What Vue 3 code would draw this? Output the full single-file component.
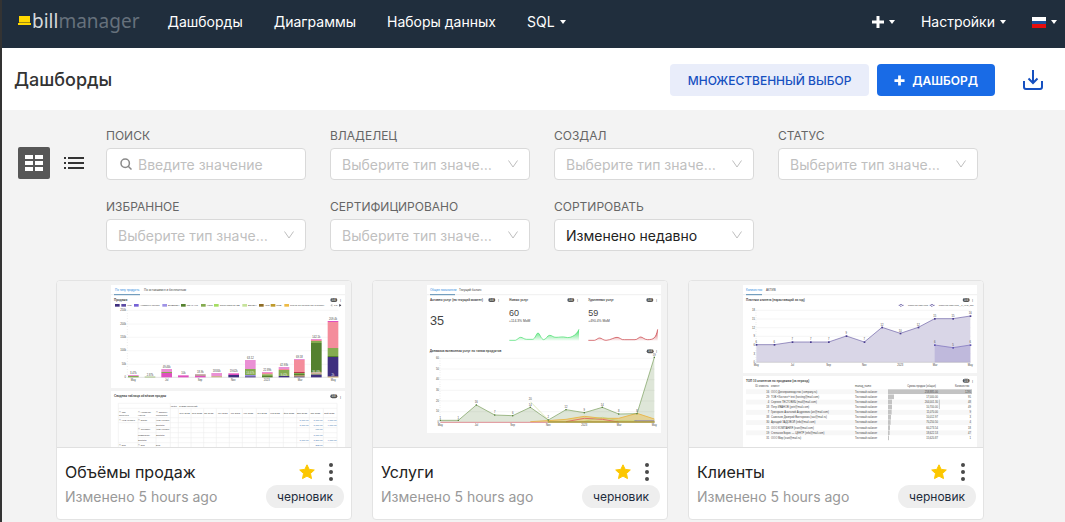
<script setup>
import { ref } from "vue";

const viewMode = ref("grid");
const search = ref("");

const menu = ["Дашборды", "Диаграммы", "Наборы данных"];

const filters = ref([
  { id: "owner", label: "Владелец", value: "" },
  { id: "created", label: "Создал", value: "" },
  { id: "status", label: "Статус", value: "" },
  { id: "favorite", label: "Избранное", value: "" },
  { id: "certified", label: "Сертифицировано", value: "" },
  { id: "sort", label: "Сортировать", value: "recent" },
]);

const dashboards = ref([
  { id: 1, kind: "sales", title: "Объёмы продаж", favorite: true },
  { id: 2, kind: "services", title: "Услуги", favorite: true },
  { id: 3, kind: "clients", title: "Клиенты", favorite: true },
]);

// colours of the stacked bars
const c = {
  navy: "#3f2f7f",
  violet: "#9a8fe0",
  dark: "#54812f",
  green: "#84ab50",
  pink: "#ea90d4",
  magenta: "#df50bf",
  salmon: "#f48d9b",
  red: "#b33a4b",
  brown: "#a5803f",
  sand: "#cdb28f",
  orange: "#d9a441",
};

const bars = [
  { x: 250, label: "3.47k", parts: [[300, 303, c.pink], [303, 307, c.green]] },
  { x: 300, label: "2.87k", parts: [[305, 307, c.green]] },
  { x: 350, label: "49.46k", parts: [[282, 291, c.pink], [291, 294, c.green], [294, 307, c.magenta]] },
  { x: 400, label: "10k", parts: [[300, 303, c.pink], [303, 307, c.magenta]] },
  { x: 451, label: "18.9k", parts: [[297, 299, c.pink], [299, 302, c.green], [302, 307, c.magenta]] },
  { x: 500, label: "18.84k", parts: [[294, 303, c.pink], [303, 307, c.sand]] },
  { x: 551, label: "19.62k", parts: [[294, 297, c.pink], [297, 300, c.magenta], [300, 307, c.navy]] },
  { x: 601, label: "63.12", parts: [[255, 282, c.pink], [282, 300, c.green], [300, 304, c.violet], [304, 307, c.navy]] },
  { x: 652, label: "22.89k", parts: [[291, 294, c.pink], [294, 298, c.salmon], [298, 303, c.green], [303, 307, c.dark]] },
  { x: 702, label: "42.93k", parts: [[276, 282, c.pink], [282, 285, c.salmon], [285, 303, c.green], [303, 307, c.navy]] },
  { x: 748, label: "69.58", parts: [[252, 255, c.pink], [255, 291, c.salmon], [291, 294, c.red], [294, 297, c.green], [297, 301, c.dark], [301, 305, c.brown], [305, 307, c.navy]] },
  { x: 799, label: "142.1k", parts: [[192, 195, c.pink], [195, 198, c.salmon], [198, 204, c.green], [204, 293, c.dark], [293, 296, c.salmon], [296, 299, c.green], [299, 307, c.navy]] },
  { x: 849, label: "209.4k", parts: [[138, 141, c.magenta], [141, 219, c.salmon], [219, 243, c.green], [243, 246, c.dark], [246, 305, c.navy], [305, 307, c.orange]] },
];

const salesLegend = [
  { x: 195, color: "#3f2f7f", text: "" },
  { x: 214, color: "#5b4ba5", text: "VPS" },
  { x: 252, color: "#7562d6", text: "Антивирус защита" },
  { x: 337, color: "#9f93e6", text: "ВЫДЕЛЕН" },
  { x: 393, color: "#54812f", text: "ПОЧТ. усл" },
  { x: 453, color: "#84ab50", text: "ХОСТ" },
  { x: 492, color: "#a5dd62", text: "Обслуживание БД" },
  { x: 577, color: "#c6e39b", text: "ДОМЕН" },
  { x: 627, color: "#8e6c25", text: "VDS" },
  { x: 662, color: "#bf9a2b", text: "ЦОД" },
  { x: 703, color: "#eebb45", text: "Услуги без продления и оплаты" },
];

const pivotCols = [
  { x: 404, text: "июн 2022" },
  { x: 441, text: "июл 2022" },
  { x: 476, text: "авг 2022" },
  { x: 518, text: "сен 2022" },
  { x: 556, text: "окт 2022" },
  { x: 595, text: "ноя 2022" },
  { x: 636, text: "дек 2022" },
  { x: 675, text: "янв 2023" },
  { x: 717, text: "фев 2023" },
  { x: 756, text: "мар 2023" },
  { x: 796, text: "апр 2023" },
  { x: 838, text: "май 2023" },
];

const pivotRows = [
  { y: 438, a: "☐ VPS хостинг", b: "☐ Digital", d: "VPS хостинг", v: ["1,600.00", "1,600.00", "4,000.00"] },
  { y: 452, d: "Subtotal", v: ["1,600.00", "1,600.00", "4,000.00"] },
  { y: 466, b: "☐ Сервисы", d: "VPS хостинг", v: ["", "900.00", ""] },
  { y: 482, b: "администр.", d: "Subtotal", v: ["", "1,000.00", ""] },
  { y: 498, b: "Subtotal", v: ["1,600.00", "1,800.00", "4,000.00"] },
  { y: 513, a: "☐ Dns", b: "☐ Dns", d: "Dns", v: ["", "362.00", ""] },
];

const servicePoints = [
  [223, 436, "1"], [277, 436, "1"], [331, 390, "16"], [386, 420, "7"], [440, 422, "6"],
  [493, 397, "14"], [547, 435, "2"], [600, 404, "12"], [655, 413, "9"], [709, 397, "14"],
  [758, 417, "8"], [813, 416, "8"], [865, 247, "59"],
];

const clientPoints = [
  [223, 209, "6"], [277, 209, "6"], [331, 201, "7"], [386, 201, "7"], [440, 201, "7"],
  [493, 183, "9"], [547, 201, "7"], [600, 157, "12"], [655, 175, "10"], [709, 157, "12"],
  [758, 131, "15"], [813, 131, "15"], [865, 123, "16"],
];

const toLine = (points) => points.map(([x, y]) => `${x},${y}`).join(" ");

const months = [
  { x: 223, text: "May" },
  { x: 331, text: "Jul" },
  { x: 440, text: "Sep" },
  { x: 547, text: "Nov" },
  { x: 655, text: "2023" },
  { x: 759, text: "Mar" },
  { x: 865, text: "May" },
];

const topRows = [
  { id: 16, name: "ООО Делопроизводство (company.ru)", sum: "258,885.00", bar: 252, n: "1295" },
  { id: 29, name: "ТОВ «Хостинг» test (hosting@mail.com)", sum: "17,000.00", bar: 18, n: "95" },
  { id: 4, name: "Сергеев ТЕСТОВИЧ (mail@mail.com)", sum: "264,001.30", bar: 12, n: "48" },
  { id: 18, name: "Петр ИВАНОВ (petr@mail.com)", sum: "10,700.00", bar: 12, n: "49" },
  { id: 7, name: "Григорьев Анатолий Андреевич (an@mail.com)", sum: "11,070.00", bar: 11, n: "9" },
  { id: 38, name: "Савельев Дмитрий Викторович (sav@mail.ru)", sum: "10,012.97", bar: 9, n: "3" },
  { id: 30, name: "Аркадий ЗАДОВОЙ (info@mail.com)", sum: "70,250.50", bar: 8, n: "4" },
  { id: 15, name: "ООО КОМПАНИЯ (ivan@mail.com)", sum: "60,273.54", bar: 6, n: "18" },
  { id: 19, name: "Степанов Борис — ЦЕНТР (info@mail.com)", sum: "18,622.53", bar: 5, n: "47" },
  { id: 31, name: "ООО Мир (ivan@mail.ru)", sum: "15,620.87", bar: 3, n: "1" },
];
</script>

<template>
  <div class="app">
    <header class="navbar">
      <a href="#" class="logo" aria-label="billmanager">
        <svg class="logo-mark" viewBox="0 0 13 10" aria-hidden="true">
          <rect x="1" y="0" width="11" height="6" fill="#ffd800" />
          <rect x="0" y="7" width="13" height="2" fill="#ffd800" />
          <rect x="1" y="6" width="11" height="1" fill="#a08c12" />
        </svg>
        <span class="logo-bill">bill</span><span class="logo-manager">manager</span>
      </a>

      <nav class="menu">
        <a v-for="item in menu" :key="item" href="#" class="menu-link">{{ item }}</a>
        <button type="button" class="menu-link">SQL <span class="caret"></span></button>
      </nav>

      <div class="menu-right">
        <button type="button" class="menu-link" aria-label="Добавить">
          <svg class="plus" viewBox="0 0 12 12" aria-hidden="true">
            <path d="M4.500 0h3v4.500h4.500v3h-4.500v4.500h-3v-4.500h-4.500v-3h4.500z" fill="#fff" />
          </svg>
          <span class="caret"></span>
        </button>
        <button type="button" class="menu-link">Настройки <span class="caret"></span></button>
        <button type="button" class="menu-link" aria-label="Язык">
          <svg class="flag" viewBox="0 0 14 11" aria-hidden="true">
            <rect width="14" height="4" fill="#fff" />
            <rect y="4" width="14" height="3" fill="#1c4f9c" />
            <rect y="7" width="14" height="4" fill="#e60d0d" />
          </svg>
          <span class="caret"></span>
        </button>
      </div>
    </header>

    <div class="page-header">
      <h1 class="page-title">Дашборды</h1>
      <div class="actions">
        <button type="button" class="btn btn-secondary">Множественный выбор</button>
        <button type="button" class="btn btn-primary">
          <svg class="btn-plus" viewBox="0 0 12 12" aria-hidden="true">
            <path d="M4.500 0.500h3v4h4v3h-4v4h-3v-4h-4v-3h4z" fill="#fff" />
          </svg>
          Дашборд
        </button>
        <button type="button" class="import-btn" aria-label="Импорт">
          <svg viewBox="0 0 20 20" fill="none" stroke="#1650c0" stroke-width="2" aria-hidden="true">
            <path d="M1 11v6a2 2 0 0 0 2 2h14a2 2 0 0 0 2-2v-6M10 0v13M5.500 8.500l4.500 4.500l4.500-4.500" />
          </svg>
        </button>
      </div>
    </div>

    <div class="controls">
      <div class="view-modes">
        <button
          type="button"
          :class="['view-btn', { active: viewMode === 'grid' }]"
          aria-label="Карточки"
          @click="viewMode = 'grid'"
        >
          <svg viewBox="0 0 18 16" fill="currentColor" aria-hidden="true">
            <path d="M0 0h8v4H0zM10 0h8v4h-8zM0 6h8v4H0zM10 6h8v4h-8zM0 12h8v4H0zM10 12h8v4h-8z" />
          </svg>
        </button>
        <button
          type="button"
          :class="['view-btn', 'view-list', { active: viewMode === 'list' }]"
          aria-label="Список"
          @click="viewMode = 'list'"
        >
          <svg viewBox="0 0 20 12" fill="currentColor" aria-hidden="true">
            <path d="M0 0h2v2H0zM4 0h16v2H4zM0 5h2v2H0zM4 5h16v2H4zM0 10h2v2H0zM4 10h16v2H4z" />
          </svg>
        </button>
      </div>

      <div class="filters">
        <div class="filter">
          <label for="search">Поиск</label>
          <div class="field">
            <svg class="search-icon" viewBox="0 0 12 12" fill="none" stroke="#8a8a8a" stroke-width="1.5" aria-hidden="true">
              <circle cx="5.200" cy="5.200" r="4.200" />
              <path d="M8.200 8.200L11.500 11.500" />
            </svg>
            <input id="search" v-model="search" type="text" placeholder="Введите значение" />
          </div>
        </div>
        <div v-for="filter in filters" :key="filter.id" class="filter">
          <label :for="filter.id">{{ filter.label }}</label>
          <div class="field">
            <select :id="filter.id" v-model="filter.value" :class="{ empty: !filter.value }">
              <option v-if="filter.id === 'sort'" value="recent">Изменено недавно</option>
              <option v-else value="">Выберите тип значения</option>
            </select>
            <svg class="chevron" viewBox="0 0 12 12" fill="none" stroke="#bfbfbf" aria-hidden="true">
              <path d="M1.500 2.500L6 9L10.500 2.500" />
            </svg>
          </div>
        </div>
      </div>
    </div>

    <main class="cards">
      <article v-for="item in dashboards" :key="item.id" class="card">
        <a href="#" class="cover" :aria-label="item.title">
          <svg v-if="item.kind === 'sales'" class="thumb" viewBox="183 30 702 486">
            <path d="M183 30h702v309H183zM183 348h702v168H183z" fill="#fff" />
            <text x="195" y="48" fill="#2e8be0">По типу продукта</text>
            <text x="282" y="48">По оставшимся и бесплатным</text>
            <path d="M183 59h702" stroke="#e8e8e8" stroke-width="2" />
            <path d="M192 59h78" stroke="#5c8fb5" stroke-width="3" />
            <text x="192" y="78" class="head">Продажи</text>
            <rect x="841" y="69" width="21" height="12" rx="6" fill="#555" />
            <text x="851" y="78" class="mid light">1/4</text>
            <text x="871" y="79" class="mid">⋮</text>
            <g v-for="entry in salesLegend" :key="entry.x">
              <rect :x="entry.x" y="87" width="14" height="8" :fill="entry.color" />
              <text :x="entry.x + 17" y="94" class="tiny">{{ entry.text }}</text>
            </g>
            <path d="M847 87l-6 4l6 4z" fill="#bbb" />
            <text x="857" y="94" class="tiny mid">1/2</text>
            <path d="M868 87l6 4l-6 4z" fill="#223" />
            <path d="M233 106h632M233 147h632M233 187h632M233 227h632M233 268h632" stroke="#f1f1f1" stroke-width="2" />
            <path d="M232 106v200" stroke="#d8d8d8" stroke-width="2" stroke-dasharray="2 6" />
            <text v-for="(n, i) in ['250k', '200k', '150k', '100k', '50k', '0']" :key="n" x="228" :y="109 + i * 40" class="small end">{{ n }}</text>
            <path d="M232 307h634" stroke="#aaa" stroke-width="1" />
            <g v-for="bar in bars" :key="bar.x">
              <rect v-for="part in bar.parts" :key="part[0]" :x="bar.x - 16" :y="part[0]" width="32" :height="part[1] - part[0]" :fill="part[2]" />
              <text :x="bar.x" :y="bar.parts[0][0] - 3" class="small mid">{{ bar.label }}</text>
            </g>
            <text v-for="(m, i) in ['May', 'Jul', 'Sep', 'Nov', '2023', 'Mar', 'May']" :key="i" :x="250 + i * 100" y="318" class="small mid">{{ m }}</text>
            <text x="601" y="298" class="small mid light">14.67k</text>
            <text x="799" y="293" class="small mid light">36.48k</text>
            <text x="702" y="303" class="small mid light">9.42k</text>
            <text x="849" y="304" class="small mid light">2k</text>

            <text x="192" y="367" class="head">Сводная таблица объёмов продаж</text>
            <rect x="841" y="358" width="21" height="12" rx="6" fill="#555" />
            <text x="851" y="367" class="mid light">1/4</text>
            <text x="871" y="368" class="mid">⋮</text>
            <path d="M205 385h656M205 400h656M205 428h656M205 443h656M264 458h597M264 473h597M264 488h597M205 503h656" stroke="#f0f0f0" stroke-width="2" />
            <path d="M205 385v131M264 428v88M318 428v88M361 385v131M385 400v116M423 400v116M461 400v116M499 400v116M538 400v116M577 400v116M619 400v116M658 400v116M700 400v116M740 400v116M778 400v116M820 400v116M861 385v131" stroke="#eee" stroke-width="2" />
            <text x="362" y="395" class="tiny">Metric</text>
            <text x="387" y="395" class="tiny">Сумма операций</text>
            <text x="207" y="413" class="tiny">☐ Тип</text>
            <text x="207" y="422" class="tiny">продукта</text>
            <text x="264" y="413" class="tiny">☐ Название</text>
            <text x="264" y="422" class="tiny">услуги</text>
            <text x="318" y="413" class="tiny">☐ Шаблон</text>
            <text x="318" y="422" class="tiny">обработки</text>
            <text v-for="col in pivotCols" :key="col.x" :x="col.x" y="417" class="tiny mid">{{ col.text }}</text>
            <g v-for="row in pivotRows" :key="row.y">
              <text x="207" :y="row.y" class="tiny">{{ row.a }}</text>
              <text x="264" :y="row.y" class="tiny">{{ row.b }}</text>
              <text x="318" :y="row.y" class="tiny">{{ row.d }}</text>
              <text v-for="(v, i) in row.v" :key="i" :x="776 + i * 42" :y="row.y" class="tiny end blue">{{ v }}</text>
            </g>
          </svg>

          <svg v-else-if="item.kind === 'services'" class="thumb" viewBox="183 30 702 486">
            <path d="M183 30h702v444H183z" fill="#fff" />
            <text x="192" y="48" fill="#2e8be0">Общие показатели</text>
            <text x="279" y="48">Текущий баланс</text>
            <path d="M183 59h702" stroke="#e8e8e8" stroke-width="2" />
            <path d="M192 59h75" stroke="#5c8fb5" stroke-width="3" />
            <text x="192" y="78" class="head">Активно услуг (на текущий момент)</text>
            <text x="430" y="78" class="head">Новых услуг</text>
            <text x="667" y="78" class="head">Удаленных услуг</text>
            <g v-for="x in [377, 614, 851]" :key="x">
              <rect :x="x - 10" y="69" width="21" height="12" rx="6" fill="#555" />
              <text :x="x" y="78" class="mid light">1/4</text>
              <text :x="x + 20" y="79" class="mid">⋮</text>
            </g>
            <text x="192" y="151" class="huge">35</text>
            <text x="429" y="123" class="big">60</text>
            <text x="429" y="142" class="sub">+114.3% MoM</text>
            <text x="667" y="123" class="big">59</text>
            <text x="667" y="142" class="sub">+490.4% MoM</text>
            <defs>
              <linearGradient id="up" x1="0" y1="0" x2="0" y2="1">
                <stop offset="0" stop-color="#42dd69" />
                <stop offset="1" stop-color="#42dd69" stop-opacity="0.05" />
              </linearGradient>
              <linearGradient id="down" x1="0" y1="0" x2="0" y2="1">
                <stop offset="0" stop-color="#cf3f45" />
                <stop offset="1" stop-color="#cf3f45" stop-opacity="0.05" />
              </linearGradient>
            </defs>
            <path d="M430 196H448C455 194 458 187 464 187S474 193 482 193H500C508 192 511 174 516 174S525 193 533 194C541 194 543 181 551 181S560 187 570 187S590 184 600 187S630 184 639 163V197H430z" fill="url(#up)" />
            <path d="M430 196H448C455 194 458 187 464 187S474 193 482 193H500C508 192 511 174 516 174S525 193 533 194C541 194 543 181 551 181S560 187 570 187S590 184 600 187S630 184 639 163" fill="none" stroke="#42dd69" stroke-width="2" />
            <path d="M667 196H685C692 195 695 189 701 189S711 196 720 196C735 195 744 187 753 187S766 196 775 194H807C815 194 818 186 824 186S835 194 845 194C862 194 870 190 875 163V197H667z" fill="url(#down)" />
            <path d="M667 196H685C692 195 695 189 701 189S711 196 720 196C735 195 744 187 753 187S766 196 775 194H807C815 194 818 186 824 186S835 194 845 194C862 194 870 190 875 163" fill="none" stroke="#c5363d" stroke-width="2" />

            <text x="191" y="232" class="head">Динамика включения услуг по типам продуктов</text>
            <rect x="842" y="223" width="21" height="12" rx="6" fill="#555" />
            <text x="852" y="232" class="mid light">1/4</text>
            <text x="871" y="232" class="mid">⋮</text>
            <path d="M223 250h643M223 282h643M223 314h643M223 346h643M223 378h643M223 410h643" stroke="#f0f0f0" stroke-width="2" />
            <path d="M222 250v192" stroke="#d8d8d8" stroke-width="2" stroke-dasharray="2 5" />
            <text v-for="(n, i) in ['60', '50', '40', '30', '20', '10', '0']" :key="n" x="219" :y="252 + i * 32" class="small end">{{ n }}</text>
            <polygon :points="`223,442 ${toLine(servicePoints)} 865,442`" fill="#688c4d" fill-opacity="0.22" />
            <polyline points="493,380 547,435" fill="none" stroke="#cfe09b" stroke-width="2" />
            <polygon points="493,440 547,436 600,433 655,424 709,429 758,430 813,415 865,432 865,442 493,442" fill="#e7c15f" fill-opacity="0.55" />
            <polyline points="493,440 547,437 600,433 655,424 709,430 758,430 813,415 865,432" fill="none" stroke="#e9b950" stroke-width="3" />
            <polyline points="600,440 655,430 709,433 758,441" fill="none" stroke="#dd7368" stroke-width="3" />
            <polyline points="655,439 709,427 758,437 813,438" fill="none" stroke="#b6ce6e" stroke-width="2" />
            <polyline :points="toLine(servicePoints)" fill="none" stroke="#759b57" stroke-width="2" />
            <path d="M223 442h322" stroke="#df8e95" stroke-width="3" />
            <path d="M545 441h321" stroke="#a79436" stroke-width="4" />
            <path d="M805 437h60" stroke="#7972aa" stroke-width="2" />
            <g v-for="p in servicePoints" :key="p[0]">
              <rect :x="p[0] - 2" :y="p[1] - 2" width="4" height="4" fill="#5c8340" />
              <text :x="p[0]" :y="p[1] - 5" class="small mid">{{ p[2] }}</text>
            </g>
            <text x="493" y="375" class="small mid">20</text>
            <text v-for="m in months" :key="m.x" :x="m.x" y="453" class="small mid">{{ m.text }}</text>
          </svg>

          <svg v-else class="thumb" viewBox="183 30 702 486">
            <path d="M183 30h702v264H183zM183 303h702v213H183z" fill="#fff" />
            <text x="192" y="48" fill="#2e8be0">Количество</text>
            <text x="252" y="48">АКТИВ</text>
            <path d="M183 59h702" stroke="#e8e8e8" stroke-width="2" />
            <path d="M192 59h48" stroke="#5c8fb5" stroke-width="3" />
            <text x="192" y="78" class="head">Платежи клиента (нарастающий за год)</text>
            <rect x="842" y="69" width="21" height="12" rx="6" fill="#555" />
            <text x="852" y="78" class="mid light">1/4</text>
            <text x="871" y="79" class="mid">⋮</text>
            <path d="M650 91h15M743 91h15" stroke="#5a4e9b" stroke-width="2" />
            <path d="M657 87l4 4l-4 4l-4-4zM750 87l4 4l-4 4l-4-4z" fill="#fff" stroke="#5a4e9b" stroke-width="2" />
            <text x="738" y="94" class="tiny end">Платежи клиентов</text>
            <text x="875" y="94" class="tiny end">Платежи клиентов__1_year_ago</text>
            <path d="M223 106h643M223 132h643M223 158h643M223 184h643M223 210h643M223 236h643" stroke="#f0f0f0" stroke-width="2" />
            <path d="M222 106v156" stroke="#d8d8d8" stroke-width="2" stroke-dasharray="2 5" />
            <text v-for="(n, i) in ['18', '15', '12', '9', '6', '3', '0']" :key="n" x="219" :y="109 + i * 26" class="small end">{{ n }}</text>
            <polygon :points="`223,262 ${toLine(clientPoints)} 865,262`" fill="#d9d6e7" />
            <polygon points="758,262 758,210 813,218 865,210 865,262" fill="#bfb9dc" />
            <polyline :points="toLine(clientPoints)" fill="none" stroke="#6b5fa6" stroke-width="2" />
            <polyline points="758,210 813,218 865,210" fill="none" stroke="#7468b9" stroke-width="2" />
            <g v-for="p in clientPoints" :key="p[0]">
              <rect :x="p[0] - 2" :y="p[1] - 2" width="5" height="5" fill="#4a3d8f" />
              <text :x="p[0]" :y="p[1] - 5" class="small mid">{{ p[2] }}</text>
            </g>
            <g v-for="p in [[758, 210, '6'], [813, 218, '5'], [865, 210, '6']]" :key="p[0]">
              <rect :x="p[0] - 2" :y="p[1] - 2" width="5" height="5" fill="#6054b0" />
              <text :x="p[0]" :y="p[1] - 5" class="small mid">{{ p[2] }}</text>
            </g>
            <path d="M223 262h643" stroke="#999" />
            <text v-for="m in months" :key="m.x" :x="m.x" y="272" class="small mid">{{ m.text }}</text>

            <text x="192" y="320" class="head">ТОП 10 клиентов по продажам (за период)</text>
            <rect x="842" y="311" width="21" height="12" rx="6" fill="#555" />
            <text x="852" y="320" class="mid light">1/4</text>
            <text x="871" y="321" class="mid">⋮</text>
            <text x="220" y="337" class="small">ID клиента</text>
            <text x="267" y="337" class="small">клиент</text>
            <text x="519" y="337" class="small">manag_name</text>
            <text x="762" y="337" class="small end">Сумма продаж (общая)</text>
            <text x="862" y="337" class="small end">Количество</text>
            <g v-for="(row, i) in topRows" :key="row.id">
              <rect x="192" :y="343 + i * 15.4" width="678" height="15" :fill="i % 2 ? '#fff' : '#f7f7f7'" />
              <rect x="618" :y="343 + i * 15.4" :width="row.bar" height="14" fill="#c3c3c3" />
              <text x="262" :y="353 + i * 15.4" class="small end">{{ row.id }}</text>
              <text x="267" :y="353 + i * 15.4" class="small">{{ row.name }}</text>
              <text x="519" :y="353 + i * 15.4" class="small">Тестовый кабинет</text>
              <text x="768" :y="353 + i * 15.4" class="small end">{{ row.sum }}</text>
              <text x="867" :y="353 + i * 15.4" class="small end">{{ row.n }}</text>
            </g>
            <path d="M772 374v28" stroke="#c3c3c3" stroke-width="3" />
          </svg>
        </a>

        <div class="card-body">
          <div class="card-row">
            <h2 class="card-title">{{ item.title }}</h2>
            <div class="card-actions">
              <button type="button" class="icon-btn" aria-label="Избранное" @click="item.favorite = !item.favorite">
                <svg class="star" viewBox="0 0 16 16" aria-hidden="true">
                  <path
                    d="M8 0.800L10.200 5.400L15.300 6L11.500 9.500L12.500 14.600L8 12.100L3.500 14.600L4.500 9.500L0.700 6L5.800 5.400z"
                    :fill="item.favorite ? '#fcc700' : '#b2b2b2'"
                    :stroke="item.favorite ? '#fcc700' : '#b2b2b2'"
                    stroke-linejoin="round"
                  />
                </svg>
              </button>
              <button type="button" class="icon-btn" aria-label="Ещё">
                <svg class="dots" viewBox="0 0 4 18" fill="#4a4a4a" aria-hidden="true">
                  <circle cx="2" cy="2" r="2" />
                  <circle cx="2" cy="9" r="2" />
                  <circle cx="2" cy="16" r="2" />
                </svg>
              </button>
            </div>
          </div>
          <div class="card-row">
            <span class="card-date">Изменено 5 hours ago</span>
            <span class="badge">черновик</span>
          </div>
        </div>
      </article>
    </main>
  </div>
</template>

<style>
body {
  background: #f3f3f3;
}
</style>

<style scoped>
.app {
  min-height: 100vh;
  box-sizing: border-box;
  border-left: 2px solid #333;
  background: #f3f3f3;
  color: #333;
  font-family: Inter, "Liberation Sans", sans-serif;
  font-size: 14px;
}

button,
input,
select {
  font: inherit;
}

button {
  border: none;
  background: none;
  padding: 0;
  cursor: pointer;
}

a {
  text-decoration: none;
}

svg {
  display: block;
}

.navbar {
  display: flex;
  align-items: center;
  height: 48px;
  padding: 0 8px 4px 16px;
  box-sizing: border-box;
  background: #202e3d;
}

.logo {
  display: flex;
  align-items: center;
  padding-bottom: 2px;
  font-family: "Noto Sans", sans-serif;
  font-size: 19px;
}

.logo-mark {
  width: 13px;
  height: 10px;
  margin-right: 1px;
}

.logo-bill {
  color: #d5d9dc;
}

.logo-manager {
  color: #66717c;
}

.menu {
  display: flex;
  gap: 31px;
  margin-left: 28px;
}

.menu-right {
  display: flex;
  align-items: center;
  gap: 26px;
  margin-left: auto;
}

.menu-link {
  display: flex;
  align-items: center;
  gap: 5px;
  color: #fff;
  line-height: 20px;
  white-space: nowrap;
}

.caret {
  border: 3px solid transparent;
  border-top: 4px solid #fff;
  border-bottom: none;
}

.plus {
  width: 12px;
  height: 12px;
}

.flag {
  width: 14px;
  height: 11px;
}

.page-header {
  display: flex;
  align-items: center;
  justify-content: space-between;
  height: 62px;
  padding: 2px 22px 0 12px;
  box-sizing: border-box;
  background: #fff;
}

.page-title {
  margin: 0;
  font-size: 18px;
  font-weight: 500;
  line-height: 24px;
}

.actions {
  display: flex;
  align-items: center;
  gap: 8px;
}

.btn {
  display: flex;
  align-items: center;
  gap: 7px;
  height: 32px;
  padding: 0 18px;
  border-radius: 4px;
  font-size: 12px;
  font-weight: 500;
  text-transform: uppercase;
  white-space: nowrap;
}

.btn-secondary {
  background: #e9edfa;
  color: #1650c0;
}

.btn-primary {
  padding: 0 17px;
  background: #196be6;
  color: #fff;
  font-weight: 600;
}

.btn-plus {
  width: 11px;
  height: 11px;
}

.import-btn {
  margin-left: 20px;
}

.import-btn svg {
  width: 20px;
  height: 20px;
}

.controls {
  display: flex;
  align-items: flex-start;
  padding: 16px 20px 0 16px;
}

.view-modes {
  display: flex;
  gap: 8px;
  margin-top: 21px;
}

.view-btn {
  display: flex;
  align-items: center;
  justify-content: center;
  width: 32px;
  height: 32px;
  border-radius: 2px;
  color: #333;
}

.view-btn.active {
  background: #575757;
  color: #fff;
}

.view-btn svg {
  width: 18px;
  height: 16px;
}

.view-list svg {
  width: 20px;
  height: 12px;
}

.filters {
  display: flex;
  flex-wrap: wrap;
  gap: 17px 24px;
  margin-left: 16px;
}

.filter {
  width: 200px;
}

.filter label {
  display: block;
  margin-bottom: 2px;
  color: #666;
  font-size: 12px;
  line-height: 20px;
  text-transform: uppercase;
}

.field {
  display: flex;
  align-items: center;
  height: 32px;
  padding: 0 10px 0 11px;
  box-sizing: border-box;
  border: 1px solid #d9d9d9;
  border-radius: 4px;
  background: #fff;
}

.field input,
.field select {
  flex: 1;
  min-width: 0;
  height: 100%;
  padding: 0;
  border: none;
  outline: none;
  background: transparent;
  color: #222;
  font-size: 14px;
}

.field select {
  appearance: none;
  overflow: hidden;
  text-overflow: ellipsis;
  white-space: nowrap;
}

.field select.empty,
.field input::placeholder {
  color: #bfbfbf;
}

.search-icon {
  width: 12px;
  height: 12px;
  margin: 0 6px 0 2px;
}

.chevron {
  width: 12px;
  height: 12px;
  margin-left: 14px;
}

.cards {
  display: grid;
  grid-template-columns: repeat(auto-fill, minmax(280px, 1fr));
  gap: 20px;
  padding: 29px 81px 0 54px;
}

.card {
  border: 1px solid #e3e3e3;
  border-radius: 4px;
  background: #fff;
  overflow: hidden;
}

.cover {
  display: block;
  padding: 4px 6px 0 54px;
  border-bottom: 1px solid #e0e0e0;
  background: #f3f3f3;
}

.thumb {
  width: 100%;
  height: auto;
}

.thumb text {
  font-family: "Liberation Sans", sans-serif;
  font-size: 9px;
}

.thumb text:not([fill]) {
  fill: #444;
}

.thumb .small {
  font-size: 8px;
}

.thumb .tiny {
  font-size: 7px;
}

.thumb .head {
  font-weight: 700;
  fill: #234;
}

.thumb .huge {
  font-size: 38px;
  fill: #111;
}

.thumb .big {
  font-size: 27px;
  fill: #111;
}

.thumb .sub {
  font-size: 10px;
}

.thumb .mid {
  text-anchor: middle;
}

.thumb .end {
  text-anchor: end;
}

.thumb text.light {
  fill: #eee;
}

.thumb text.blue {
  fill: #2565a8;
}

.card-body {
  padding: 12px 7px 11px 8px;
}

.card-row {
  display: flex;
  align-items: center;
  justify-content: space-between;
  height: 24px;
}

.card-title {
  margin: 0;
  color: #222;
  font-size: 16px;
  font-weight: 400;
}

.card-actions {
  display: flex;
  align-items: center;
  gap: 14px;
  margin-right: 11px;
}

.star {
  width: 16px;
  height: 16px;
}

.dots {
  width: 4px;
  height: 18px;
}

.card-date {
  color: #999;
}

.badge {
  padding: 0 11px;
  border-radius: 12px;
  background: #eee;
  color: #222c3c;
  font-size: 12px;
  line-height: 23px;
}
</style>
